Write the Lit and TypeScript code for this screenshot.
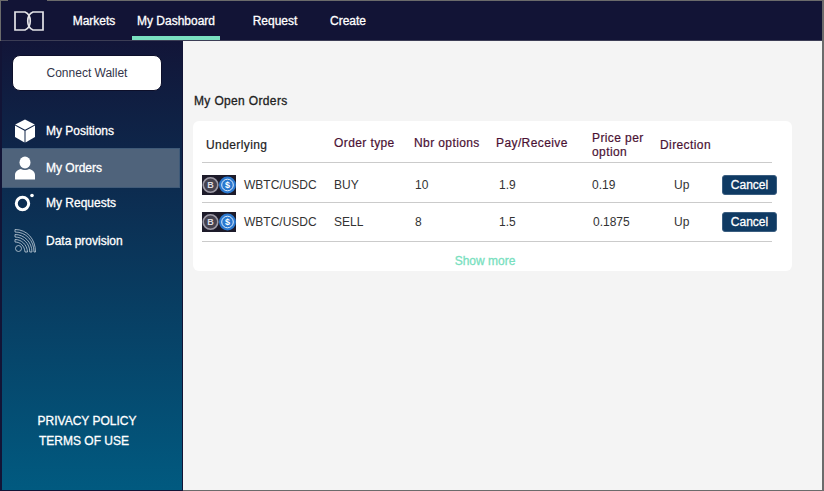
import { LitElement, html, css, svg } from "lit";
import { customElement } from "lit/decorators.js";

const orders = [
  { type: "BUY", nbr: "10", pay: "1.9", price: "0.19" },
  { type: "SELL", nbr: "8", pay: "1.5", price: "0.1875" },
];

const cube = svg`<svg width="22" height="24" viewBox="0 0 22 24" fill="#fff">
  <polygon points="11,0.5 20.8,5.6 11,10.8 1.2,5.6"/>
  <polygon points="1,6.6 10.5,11.7 10.5,23.5 1,18"/>
  <polygon points="21,6.6 11.5,11.7 11.5,23.5 21,18"/>
</svg>`;

const person = svg`<svg width="22" height="24" viewBox="0 0 22 24" fill="#fff">
  <ellipse cx="11" cy="6.5" rx="5.5" ry="6"/>
  <path d="M1 23.5 V19 C1 15.5 4 13.5 7 13 C9 14.4 13 14.4 15 13 C18 13.5 21 15.5 21 19 V23.5 Z"/>
</svg>`;

const ring = svg`<svg width="22" height="22" viewBox="0 0 22 22" fill="none" stroke="#fff">
  <circle cx="8.5" cy="11.5" r="6.2" stroke-width="3"/>
  <circle cx="18" cy="3.5" r="1.8" fill="#fff" stroke="none"/>
</svg>`;

const rss = svg`<svg width="22" height="26" viewBox="0 0 22 26" fill="none" stroke="#c3cfd9" stroke-width="0.8">
  <circle cx="4.5" cy="20.5" r="3"/>
  <path d="M1 11.5 C7.5 11.5 13 16.5 13.5 24 H11 C10.5 18 6.5 14 1 14 Z"/>
  <path d="M1 6.5 C10 6.5 18 14 18 24 H15.8 C15.8 15.5 9 9 1 9 Z"/>
  <path d="M1 1.5 C13 1.5 21.5 11 21.5 24 H20 C20 12.5 12 4 1 4 Z"/>
</svg>`;

const logo = svg`<svg width="32" height="22" viewBox="0 0 32 22" fill="none" stroke="#e4e4e8" stroke-width="1.7">
  <path d="M2 2 H12 C19 5 19 17 12 20 H2 Z"/>
  <path d="M30 2 H20 C13 5 13 17 20 20 H30 Z"/>
</svg>`;

const coins = svg`<svg width="34" height="20" viewBox="0 0 34 20">
  <rect width="34" height="20" fill="#1d1b2a"/>
  <circle cx="8.5" cy="10" r="7.3" fill="#45424f" stroke="#9d9aa6" stroke-width="1.6"/>
  <text x="8.5" y="13.2" font-family="Liberation Sans" font-size="9" font-weight="700" text-anchor="middle" fill="#dcdbe0">B</text>
  <circle cx="25.5" cy="10" r="8.5" fill="#2a78cf"/>
  <circle cx="25.5" cy="10" r="5.8" fill="none" stroke="#dcebfa" stroke-width="1"/>
  <text x="25.5" y="13.2" font-family="Liberation Sans" font-size="9" font-weight="700" text-anchor="middle" fill="#fff">$</text>
</svg>`;

@customElement("app-root")
export class AppRoot extends LitElement {
  static styles = css`
    :host {
      width: 824px;
      height: 491px;
      box-sizing: border-box;
      font-family: "Liberation Sans", Arial, sans-serif;
      font-size: 12px;
      color: #333;
      border: 1px solid #6b6b6b;
      border-right-width: 2px;
      display: flex;
      flex-direction: column;
      background: #f4f4f4;
    }
    .topbar {
      flex: none;
      height: 39px;
      display: flex;
      align-items: stretch;
      background: #121436;
      border-bottom: 1px solid #3c3d55;
    }
    .brand {
      width: 39px;
      margin: -1px 0 0 7px;
      padding: 10px 0 0 5px;
      box-sizing: border-box;
      flex: none;
      background: #121436;
    }
    .tab {
      display: flex;
      align-items: center;
      justify-content: center;
      color: #fff;
      -webkit-text-stroke: 0.3px #fff;
      box-sizing: border-box;
      border-bottom: 4px solid transparent;
      border-top: 4px solid transparent;
    }
    .tab.markets { width: 85px; padding-left: 9px; }
    .tab.active { width: 88px; border-bottom-color: #79dfc0; }
    .tab.request { width: 110px; }
    .tab.create { width: 36px; }
    .below {
      flex: 1;
      display: flex;
      min-height: 0;
    }
    .side {
      width: 183px;
      flex: none;
      display: flex;
      flex-direction: column;
      background: linear-gradient(180deg, #121538 0%, #015a80 100%);
      border-left: 2px solid #121436;
      border-right: 1px solid #121436;
      border-bottom: 1px solid #121436;
      box-sizing: border-box;
      margin: 0 0 -1px -1px;
    }
    .connect {
      margin: 14px 0 0 10px;
      width: 150px;
      height: 36px;
      box-sizing: border-box;
      border: 1px solid #0d0f2a;
      border-radius: 8px;
      background: #fff;
      color: #33354a;
      font: 12px "Liberation Sans", Arial, sans-serif;
    }
    .menu {
      margin-top: 23px;
      display: flex;
      flex-direction: column;
    }
    .item {
      display: flex;
      align-items: center;
      color: #fff;
      -webkit-text-stroke: 0.3px #fff;
      padding-left: 12px;
      gap: 10px;
      box-sizing: border-box;
      height: 34px;
      margin-right: 2px;
    }
    .item svg { flex: none; display: block; }
    .item.on {
      height: 40px;
      background: #4f637b;
      border: 1px solid #3f5a78;
      border-left: none;
    }
    .item.req { height: 30px; }
    .item.data { height: 46px; }
    .legal {
      margin-top: auto;
      padding-bottom: 39px;
      padding-right: 10px;
      text-align: center;
      color: #fff;
      -webkit-text-stroke: 0.3px #fff;
      line-height: 20px;
    }
    .legal span { display: block; padding-right: 6px; }
    .main {
      flex: 1;
      padding: 0 0 0 10px;
      min-width: 0;
    }
    h2 {
      margin: 53px 0 0 1px;
      font-size: 12px;
      line-height: 14px;
      font-weight: 400;
      letter-spacing: 0.35px;
      -webkit-text-stroke: 0.3px #222;
      color: #222;
    }
    .card {
      margin-top: 13px;
      width: 599px;
      height: 150px;
      box-sizing: border-box;
      background: #fff;
      border-radius: 6px;
      padding: 0 20px 0 9px;
    }
    .row {
      display: grid;
      grid-template-columns: 132px 80px 82px 96px 68px 62px 1fr;
      align-items: center;
      border-bottom: 1px solid #cbcbcb;
      height: 40px;
      box-sizing: border-box;
      padding-top: 4px;
    }
    .row.head {
      height: 42px;
      color: #4a1233;
      letter-spacing: 0.4px;
      -webkit-text-stroke: 0.2px #4a1233;
      line-height: 14px;
    }
    .row.second { height: 39px; padding-top: 0; }
    .under { color: #222; -webkit-text-stroke-color: #222; padding-left: 4px; padding-top: 2px; }
    .label { padding-bottom: 2px; }
    .price-h { padding-top: 2px; }
    .dir-h { padding-top: 2px; }
    .pair {
      display: flex;
      align-items: center;
      gap: 8px;
    }
    .pair svg { display: block; }
    .num { padding-left: 1px; }
    .pay { padding-left: 3px; }
    .up { padding-left: 14px; }
    .wide { padding-left: 1px; }
    .cancel {
      width: 55px;
      height: 20px;
      padding: 0;
      border: 1px solid #3b5e80;
      border-radius: 3px;
      background: #0f3a63;
      color: #fff;
      -webkit-text-stroke: 0.3px #fff;
      font: 12px "Liberation Sans", Arial, sans-serif;
    }
    .more {
      text-align: center;
      color: #79dfc0;
      -webkit-text-stroke: 0.3px #79dfc0;
      line-height: 14px;
      margin-top: 12px;
      padding-right: 4px;
    }
  `;

  render() {
    return html`
      <div class="topbar">
        <div class="brand">${logo}</div>
        <div class="tab markets">Markets</div>
        <div class="tab active">My Dashboard</div>
        <div class="tab request">Request</div>
        <div class="tab create">Create</div>
      </div>
      <div class="below">
        <aside class="side">
          <button class="connect">Connect Wallet</button>
          <nav class="menu">
            <div class="item">${cube}My Positions</div>
            <div class="item on">${person}My Orders</div>
            <div class="item req">${ring}My Requests</div>
            <div class="item data">${rss}Data provision</div>
          </nav>
          <div class="legal">PRIVACY POLICY<span>TERMS OF USE</span></div>
        </aside>
        <main class="main">
          <h2>My Open Orders</h2>
          <section class="card">
            <div class="row head">
              <div class="under">Underlying</div>
              <div class="label">Order type</div>
              <div class="label">Nbr options</div>
              <div class="label">Pay/Receive</div>
              <div class="price-h">Price per<br />option</div>
              <div class="dir-h">Direction</div>
              <div></div>
            </div>
            ${orders.map(
              (o, i) => html`
                <div class="row ${i === 1 ? "second" : ""}">
                  <div class="pair">${coins}WBTC/USDC</div>
                  <div>${o.type}</div>
                  <div class="num">${o.nbr}</div>
                  <div class="pay">${o.pay}</div>
                  <div class="${i === 1 ? "wide" : ""}">${o.price}</div>
                  <div class="up">Up</div>
                  <div><button class="cancel">Cancel</button></div>
                </div>
              `
            )}
            <div class="more">Show more</div>
          </section>
        </main>
      </div>
    `;
  }
}
